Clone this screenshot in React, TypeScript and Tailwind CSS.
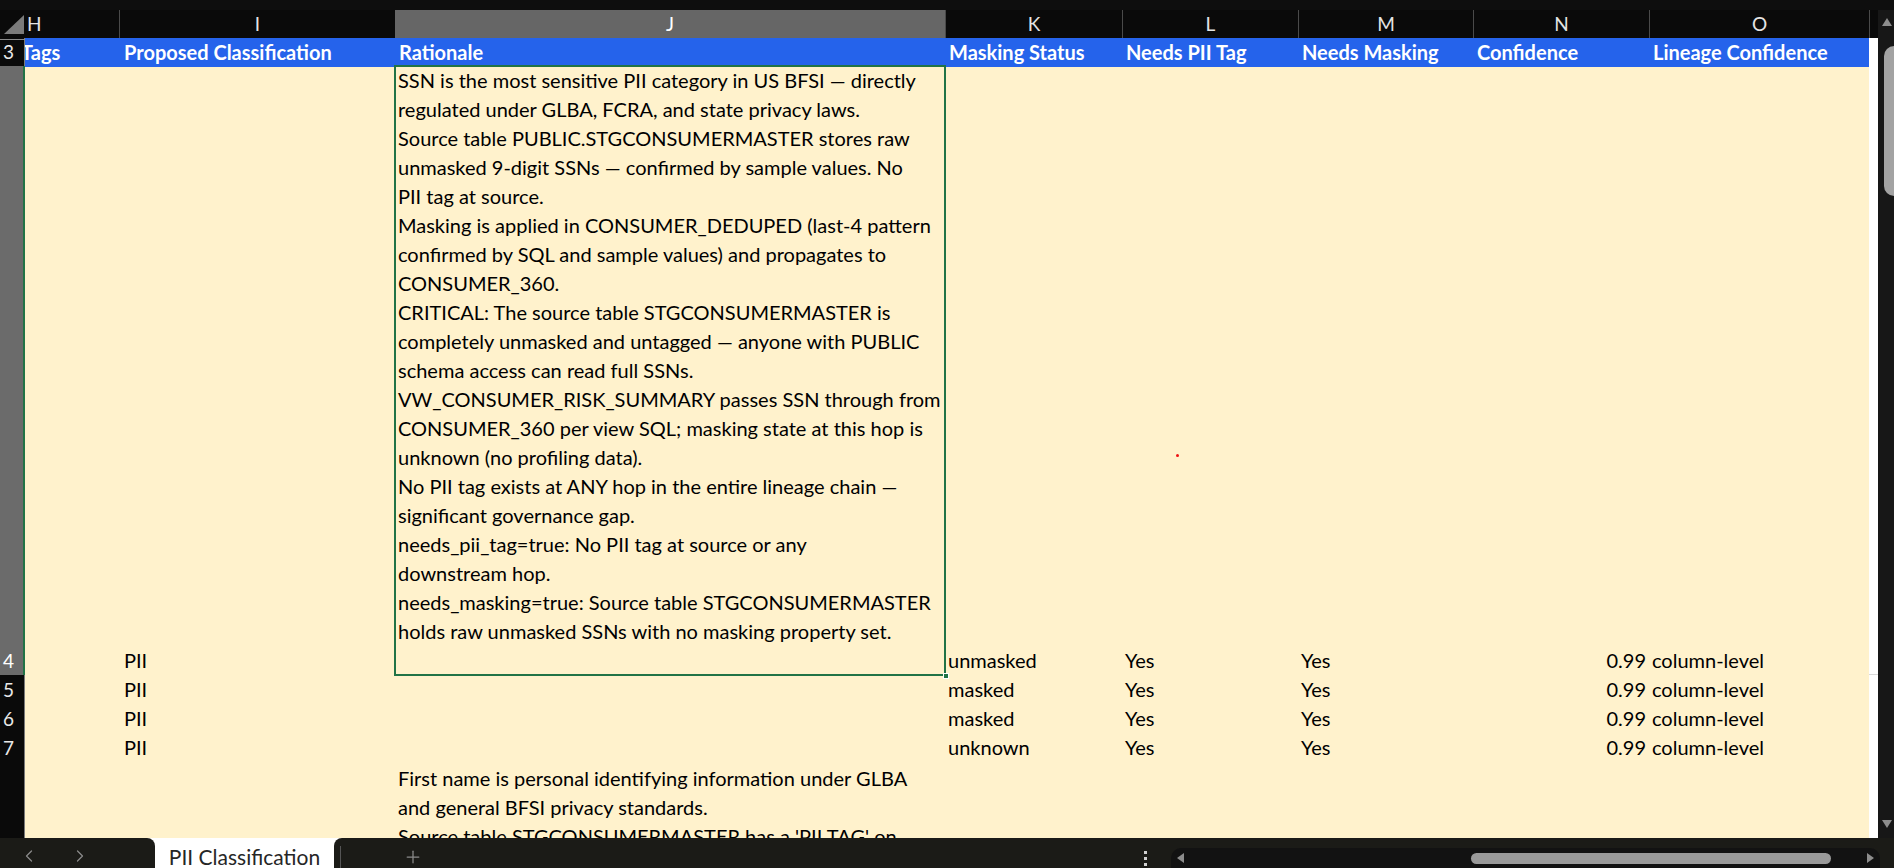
import React from 'react';
import { ChevronLeft, ChevronRight, Plus } from 'lucide-react';

const GRID = 'grid grid-cols-[25px_95px_275px_550px_177px_176px_175px_176px_220px_9px]';

const rationale = [
  'SSN is the most sensitive PII category in US BFSI — directly',
  'regulated under GLBA, FCRA, and state privacy laws.',
  'Source table PUBLIC.STGCONSUMERMASTER stores raw',
  'unmasked 9-digit SSNs — confirmed by sample values. No',
  'PII tag at source.',
  'Masking is applied in CONSUMER_DEDUPED (last-4 pattern',
  'confirmed by SQL and sample values) and propagates to',
  'CONSUMER_360.',
  'CRITICAL: The source table STGCONSUMERMASTER is',
  'completely unmasked and untagged — anyone with PUBLIC',
  'schema access can read full SSNs.',
  'VW_CONSUMER_RISK_SUMMARY passes SSN through from',
  'CONSUMER_360 per view SQL; masking state at this hop is',
  'unknown (no profiling data).',
  'No PII tag exists at ANY hop in the entire lineage chain —',
  'significant governance gap.',
  'needs_pii_tag=true: No PII tag at source or any',
  'downstream hop.',
  'needs_masking=true: Source table STGCONSUMERMASTER',
  'holds raw unmasked SSNs with no masking property set.',
];

const firstName = [
  'First name is personal identifying information under GLBA',
  'and general BFSI privacy standards.',
  "Source table STGCONSUMERMASTER has a 'PII TAG' on",
];

const rows = [
  { n: 5, status: 'masked' },
  { n: 6, status: 'masked' },
  { n: 7, status: 'unknown' },
];

const letters = ['K', 'L', 'M', 'N', 'O'];
const headers = ['Masking Status', 'Needs PII Tag', 'Needs Masking', 'Confidence', 'Lineage Confidence'];

function DataCells({ status, h }: { status: string; h: string }) {
  return (
    <>
      <div className={`${h} flex items-end px-[3px] whitespace-nowrap`}>{status}</div>
      <div className={`${h} flex items-end px-[3px]`}>Yes</div>
      <div className={`${h} flex items-end px-[3px]`}>Yes</div>
      <div className={`${h} flex items-end justify-end px-[3px]`}>0.99</div>
      <div className={`${h} flex items-end px-[3px] whitespace-nowrap`}>column-level</div>
    </>
  );
}

export default function App() {
  return (
    <div className="w-[1894px] h-[868px] overflow-hidden bg-[#0c0c0c] font-['Lato','Noto_Sans',sans-serif] text-[20px] leading-[29px] text-black relative">
      <div className="h-[10px] bg-[#0e0e0e]" />
      <div className="flex h-[828px]">
        {/* sheet grid */}
        <div className="w-[1878px] h-[828px] overflow-hidden">
          {/* column letters */}
          <div className={`${GRID} h-[28px] bg-[#0a0a0a] text-[#e4e4e4] leading-[28px] text-[19px]`}>
            <div className="relative border-b border-[#8a8a8a]">
              <div className="absolute left-[4px] top-[5px] w-0 h-0 border-l-[20px] border-l-transparent border-b-[19px] border-b-[#7b7b7b]" />
            </div>
            <div className="border-b border-[#8a8a8a] border-r border-r-[#4a4a4a] pl-[2px]">H</div>
            <div className="border-b border-[#8a8a8a] text-center">I</div>
            <div className="bg-[#666666] border-b-2 border-[#217346] text-center text-white">J</div>
            {letters.map((l) => (
              <div key={l} className="border-b border-[#8a8a8a] border-l border-l-[#4a4a4a] text-center">{l}</div>
            ))}
            <div className="border-b border-[#8a8a8a] border-l border-l-[#4a4a4a]" />
          </div>

          {/* row 3 - table header */}
          <div className={`${GRID} h-[28px] leading-[28px]`}>
            <div className="bg-[#0a0a0a] text-[#e8e8e8] pl-[3px] border-r border-[#7a7a7a] border-b border-b-[#3c3c3c] text-[19px]">3</div>
            <div className="bg-[#2563eb] text-white font-bold overflow-hidden whitespace-nowrap">
              <span className="ml-[-4px]">Tags</span>
            </div>
            <div className="bg-[#2563eb] text-white font-bold px-[4px] whitespace-nowrap">Proposed Classification</div>
            <div className="bg-[#2563eb] text-white font-bold px-[4px] whitespace-nowrap">Rationale</div>
            {headers.map((t) => (
              <div key={t} className="bg-[#2563eb] text-white font-bold px-[4px] whitespace-nowrap">{t}</div>
            ))}
            <div className="bg-white border-b border-[#d9d9d9]" />
          </div>

          {/* row 4 */}
          <div className={`${GRID} h-[609px] bg-[#fff2cc]`}>
            <div className="bg-[#6b6b6b] text-white flex items-end pl-[3px] border-r-2 border-[#217346] text-[19px]">4</div>
            <div />
            <div className="flex items-end px-[4px]">PII</div>
            <div className="relative px-[3px]">
              {rationale.map((line) => (
                <div key={line} className="whitespace-nowrap h-[29px]">{line}</div>
              ))}
              <div className="absolute inset-[-1px] border-2 border-[#217346] pointer-events-none" />
              <div className="absolute right-[-4px] bottom-[-4px] w-[6px] h-[6px] bg-[#217346] border border-white" />
            </div>
            <DataCells status="unmasked" h="h-[609px]" />
            <div className="bg-white border-b border-[#d9d9d9]" />
          </div>

          {/* rows 5-7 */}
          {rows.map((r) => (
            <div key={r.n} className={`${GRID} h-[29px] bg-[#fff2cc]`}>
              <div className="bg-[#0a0a0a] text-[#e8e8e8] pl-[3px] border-r border-[#7a7a7a] border-b border-b-[#3c3c3c] text-[19px]">{r.n}</div>
              <div />
              <div className="px-[4px]">PII</div>
              <div />
              <DataCells status={r.status} h="h-[29px]" />
              <div className="bg-white border-b border-[#d9d9d9]" />
            </div>
          ))}

          {/* row 8 */}
          <div className={`${GRID} h-[120px] bg-[#fff2cc]`}>
            <div className="bg-[#0a0a0a] border-r border-[#7a7a7a]" />
            <div />
            <div />
            <div className="px-[3px] pt-[2px]">
              {firstName.map((line) => (
                <div key={line} className="whitespace-nowrap h-[29px]">{line}</div>
              ))}
            </div>
            <div />
            <div />
            <div />
            <div />
            <div />
            <div className="bg-white" />
          </div>
        </div>

        {/* vertical scrollbar */}
        <div className="w-[16px] h-[828px] bg-[#171717] flex flex-col items-end pt-[8px]">
          <div className="w-0 h-0 mr-[2px] border-l-[5px] border-r-[5px] border-b-[8px] border-l-transparent border-r-transparent border-b-[#8d8d8d]" />
          <div className="w-[10px] h-[150px] mt-[20px] rounded-l-full bg-[#a3a3a3]" />
          <div className="flex-1" />
          <div className="w-0 h-0 mr-[2px] mb-[10px] border-l-[5px] border-r-[5px] border-t-[8px] border-l-transparent border-r-transparent border-t-[#8d8d8d]" />
        </div>
      </div>

      {/* sheet tabs bar */}
      <div className="h-[30px] flex bg-white">
        <div className="w-[155px] bg-[#1b1b17] rounded-tr-[8px] flex items-center gap-[31px] pl-[19px] pt-[6px] text-[#8a8a8a]">
          <ChevronLeft size={20} strokeWidth={1.5} />
          <ChevronRight size={20} strokeWidth={1.5} />
        </div>
        <div className="w-[179px] bg-white text-[#262626] text-[21px] flex items-center justify-center pt-[7px] whitespace-nowrap">
          PII Classification
        </div>
        <div className="flex-1 bg-[#1b1b17] rounded-tl-[8px] flex items-center">
          <div className="w-px h-[22px] bg-[#555] ml-[6px] mt-[8px]" />
          <div className="ml-[62px] mt-[8px] text-[#8a8a8a]">
            <Plus size={20} strokeWidth={1.5} />
          </div>
          <div className="ml-[721px] mt-[10px] flex flex-col gap-[3px]">
            <div className="w-[3px] h-[3px] bg-[#d0d0d0]" />
            <div className="w-[3px] h-[3px] bg-[#d0d0d0]" />
            <div className="w-[3px] h-[3px] bg-[#d0d0d0]" />
          </div>
          <div className="ml-[24px] mt-[10px] w-[709px] h-[20px] bg-[#121212] rounded-t-[10px] flex items-center px-[6px]">
            <div className="w-0 h-0 border-t-[5px] border-b-[5px] border-r-[7px] border-t-transparent border-b-transparent border-r-[#8d8d8d]" />
            <div className="ml-[287px] w-[360px] h-[11px] rounded-full bg-[#9a9a9a]" />
            <div className="flex-1" />
            <div className="w-0 h-0 border-t-[5px] border-b-[5px] border-l-[7px] border-t-transparent border-b-transparent border-l-[#8d8d8d]" />
          </div>
        </div>
      </div>

      {/* stray cursor dot */}
      <div className="absolute left-[1176px] top-[454px] w-[3px] h-[3px] rounded-full bg-[#e11]" />
    </div>
  );
}
